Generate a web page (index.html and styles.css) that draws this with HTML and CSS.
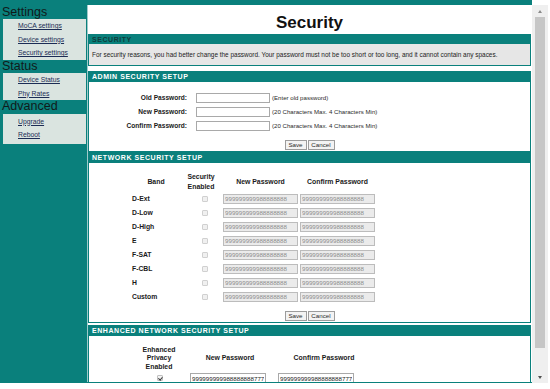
FILE: index.html
```html
<!DOCTYPE html>
<html>
<head>
<meta charset="utf-8">
<title>Security</title>
<link rel="stylesheet" href="styles.css">
</head>
<body>
<div class="screen">
  <div class="frame">
    <nav class="sidebar">
      <div class="nav-title">Settings</div>
      <ul class="nav-box">
        <li><a href="#">MoCA settings</a></li>
        <li><a href="#">Device settings</a></li>
        <li><a href="#">Security settings</a></li>
      </ul>
      <div class="nav-title">Status</div>
      <ul class="nav-box">
        <li><a href="#">Device Status</a></li>
        <li><a href="#">Phy Rates</a></li>
      </ul>
      <div class="nav-title">Advanced</div>
      <ul class="nav-box nav-box-last">
        <li><a href="#">Upgrade</a></li>
        <li><a href="#">Reboot</a></li>
      </ul>
    </nav>
    <main class="content">
      <h1 class="title">Security</h1>

      <section class="panel panel-first">
        <div class="panel-head head-dark">SECURITY</div>
        <div class="panel-note">For security reasons, you had better change the password. Your password must not be too short or too long, and it cannot contain any spaces.</div>
      </section>

      <section class="panel panel-admin">
        <div class="panel-head">ADMIN SECURITY SETUP</div>
        <div class="panel-body admin-body">
          <div class="form-grid">
            <label class="form-label">Old Password:</label>
            <input class="text-input" type="password">
            <span class="hint">(Enter old password)</span>
            <label class="form-label">New Password:</label>
            <input class="text-input" type="password">
            <span class="hint">(20 Characters Max. 4 Characters Min)</span>
            <label class="form-label">Confirm Password:</label>
            <input class="text-input" type="password">
            <span class="hint">(20 Characters Max. 4 Characters Min)</span>
          </div>
          <div class="button-row">
            <button class="btn btn-save" type="button">Save</button>
            <button class="btn btn-cancel" type="button">Cancel</button>
          </div>
        </div>
      </section>

      <section class="panel panel-network">
        <div class="panel-head">NETWORK SECURITY SETUP</div>
        <div class="panel-body network-body">
          <div class="net-grid">
            <div class="th">Band</div>
            <div class="th">Security<br>Enabled</div>
            <div class="th">New Password</div>
            <div class="th">Confirm Password</div>

            <div class="band">D-Ext</div><div class="cb-cell"><input class="check" type="checkbox" disabled></div><input class="text-input net-input" type="text" value="999999999988888888" disabled><input class="text-input net-input" type="text" value="999999999988888888" disabled>
            <div class="band">D-Low</div><div class="cb-cell"><input class="check" type="checkbox" disabled></div><input class="text-input net-input" type="text" value="999999999988888888" disabled><input class="text-input net-input" type="text" value="999999999988888888" disabled>
            <div class="band">D-High</div><div class="cb-cell"><input class="check" type="checkbox" disabled></div><input class="text-input net-input" type="text" value="999999999988888888" disabled><input class="text-input net-input" type="text" value="999999999988888888" disabled>
            <div class="band">E</div><div class="cb-cell"><input class="check" type="checkbox" disabled></div><input class="text-input net-input" type="text" value="999999999988888888" disabled><input class="text-input net-input" type="text" value="999999999988888888" disabled>
            <div class="band">F-SAT</div><div class="cb-cell"><input class="check" type="checkbox" disabled></div><input class="text-input net-input" type="text" value="999999999988888888" disabled><input class="text-input net-input" type="text" value="999999999988888888" disabled>
            <div class="band">F-CBL</div><div class="cb-cell"><input class="check" type="checkbox" disabled></div><input class="text-input net-input" type="text" value="999999999988888888" disabled><input class="text-input net-input" type="text" value="999999999988888888" disabled>
            <div class="band">H</div><div class="cb-cell"><input class="check" type="checkbox" disabled></div><input class="text-input net-input" type="text" value="999999999988888888" disabled><input class="text-input net-input" type="text" value="999999999988888888" disabled>
            <div class="band">Custom</div><div class="cb-cell"><input class="check" type="checkbox" disabled></div><input class="text-input net-input" type="text" value="999999999988888888" disabled><input class="text-input net-input" type="text" value="999999999988888888" disabled>
          </div>
          <div class="button-row">
            <button class="btn btn-save" type="button">Save</button>
            <button class="btn btn-cancel" type="button">Cancel</button>
          </div>
        </div>
      </section>

      <section class="panel panel-enhanced">
        <div class="panel-head">ENHANCED NETWORK SECURITY SETUP</div>
        <div class="panel-body enhanced-body">
          <div class="enh-grid">
            <div class="th enh-th">Enhanced<br>Privacy<br>Enabled</div>
            <div class="th enh-th">New Password</div>
            <div class="th enh-th">Confirm Password</div>
            <div class="cb-cell enh-cb"><input class="check" type="checkbox" checked></div>
            <input class="text-input enh-input enh-new" type="text" value="999999999988888888777">
            <input class="text-input enh-input enh-confirm" type="text" value="999999999988888888777">
          </div>
        </div>
      </section>
    </main>
  </div>
  <div class="scrollbar">
    <div class="sb-arrow"><span class="arrow-up"></span></div>
    <div class="sb-thumb"></div>
    <div class="sb-space"></div>
    <div class="sb-arrow"><span class="arrow-down"></span></div>
  </div>
</div>
</body>
</html>
```

FILE: styles.css
```css
* {
  box-sizing: border-box;
  margin: 0;
  padding: 0;
}

body {
  margin: 0;
  background: #ffffff;
  font-family: "Liberation Sans", Arial, sans-serif;
  color: #1e1e1e;
}

.screen {
  width: 550px;
  height: 389px;
  display: flex;
  align-items: flex-start;
  overflow: hidden;
  background: #ffffff;
}

.frame {
  width: 532px;
  height: 383px;
  flex: none;
  background: #0a807c;
  display: flex;
}

/* ---------- sidebar ---------- */
.sidebar {
  width: 87px;
  flex: none;
  padding-top: 5.5px;
}

.nav-title {
  height: 13.5px;
  line-height: 13.5px;
  font-size: 12.5px;
  padding-left: 2px;
  color: #101a1a;
}

.nav-box {
  list-style: none;
  background: #dae4e0;
  margin: 0 1px 0 3px;
  padding-left: 15px;
}

.nav-box-last {
  padding-top: 1px;
  padding-bottom: 2px;
}

.nav-box li {
  height: 13.5px;
  line-height: 13.5px;
  font-size: 6.8px;
}

.nav-box a {
  color: #1c2c55;
  text-decoration: underline;
}

/* ---------- content ---------- */
.content {
  flex: 1;
  margin-top: 5px;
  height: 377px;
  background: #ffffff;
  border-left: 1px solid #9fcaca;
  padding-right: 1px;
  overflow: hidden;
}

.title {
  margin-top: 8px;
  height: 20px;
  line-height: 20px;
  font-size: 17px;
  font-weight: bold;
  text-align: center;
  color: #111111;
}

.panel {
  border: 1px solid #0a807c;
}

.panel-first { margin-top: 1px; }
.panel-admin { margin-top: 5px; }
.panel-network { margin-top: 0; }
.panel-enhanced { margin-top: 2px; }

.panel-head {
  height: 10px;
  line-height: 10px;
  background: #0a807c;
  color: #ffffff;
  font-size: 7px;
  font-weight: bold;
  letter-spacing: 0.55px;
  padding-left: 3px;
}

.panel-first .panel-head {
  height: 9px;
  line-height: 9px;
}

.head-dark {
  color: #0f3c3b;
}

.panel-note {
  background: #e6e6e6;
  height: 21px;
  line-height: 21px;
  font-size: 6.45px;
  padding-left: 3px;
  color: #222222;
  white-space: nowrap;
}

.panel-body {
  background: #ffffff;
}

.admin-body {
  padding-top: 8.5px;
  padding-bottom: 1px;
}

.form-grid {
  display: grid;
  grid-template-columns: 107px 76px auto;
  grid-auto-rows: 14px;
  align-items: center;
}

.form-label {
  text-align: right;
  padding-right: 9px;
  font-size: 6.6px;
  font-weight: bold;
  color: #1a1a1a;
}

.text-input {
  height: 10px;
  border: 1px solid #a9a9a9;
  background: #ffffff;
  font-family: "Liberation Sans", Arial, sans-serif;
  font-size: 6.2px;
  padding: 0 1px;
  color: #222;
  outline: none;
}

.form-grid .text-input {
  width: 74px;
}

.hint {
  font-size: 6.1px;
  color: #2a2a2a;
  white-space: nowrap;
}

.button-row {
  display: flex;
  justify-content: center;
  gap: 1px;
  margin-top: 7.5px;
}

.btn {
  height: 10px;
  font-family: "Liberation Sans", Arial, sans-serif;
  font-size: 6.2px;
  line-height: 8px;
  color: #2a2a2a;
  background: #f3f3f3;
  border: 1px solid #9c9c9c;
  padding: 0;
}

.btn-save { width: 22px; }
.btn-cancel { width: 27px; }

/* ---------- network table ---------- */
.network-body {
  padding-top: 8.5px;
  padding-bottom: 1px;
}

.net-grid {
  display: grid;
  grid-template-columns: 48px 42px 77px 77px;
  grid-template-rows: 20px;
  grid-auto-rows: 14px;
  align-items: center;
  margin-left: 43px;
}

.th {
  font-size: 6.9px;
  font-weight: bold;
  line-height: 10px;
  text-align: center;
  color: #1a1a1a;
}

.band {
  font-size: 6.8px;
  font-weight: bold;
  color: #1a1a1a;
}

.cb-cell {
  display: flex;
  justify-content: center;
  padding-left: 7px;
}

.check {
  appearance: none;
  -webkit-appearance: none;
  width: 6px;
  height: 6px;
  border: 1px solid #d0d0d0;
  background: #f0f0f0;
  border-radius: 1px;
  position: relative;
  margin: 0;
}

.check:checked {
  border-color: #c0c0c0;
  background: #f4f4f4;
}

.check:checked::after {
  content: "";
  position: absolute;
  left: 1.2px;
  top: 0px;
  width: 1.5px;
  height: 2.8px;
  border: solid #3a3a3a;
  border-width: 0 1px 1px 0;
  transform: rotate(40deg);
}

.net-input {
  width: 75px;
  margin-left: 1px;
  background: #ebebeb;
  border-color: #bcbcbc;
  color: #8c8c8c;
}

/* ---------- enhanced ---------- */
.enhanced-body {
  padding-top: 9.5px;
}

.enh-grid {
  display: grid;
  grid-template-columns: 58px 84px 104px;
  grid-template-rows: 25.5px 12px;
  align-items: center;
  margin-left: 41px;
}

.enh-th {
  line-height: 8.5px;
}

.enh-cb {
  padding-left: 2px;
  align-self: end;
  padding-bottom: 2px;
}

.enh-input {
  width: 76px;
  align-self: end;
  color: #1a1a1a;
}

.enh-new { margin-left: 2px; }
.enh-confirm { margin-left: 6px; }

/* ---------- scrollbar ---------- */
.scrollbar {
  width: 16px;
  height: 378px;
  margin-top: 5px;
  flex: none;
  background: #efefef;
  display: flex;
  flex-direction: column;
  align-items: center;
}

.sb-arrow {
  height: 12px;
  width: 16px;
  display: flex;
  align-items: center;
  justify-content: center;
}

.arrow-up {
  width: 0;
  height: 0;
  border-left: 2.5px solid transparent;
  border-right: 2.5px solid transparent;
  border-bottom: 3px solid #8a8a8a;
}

.arrow-down {
  width: 0;
  height: 0;
  border-left: 2.5px solid transparent;
  border-right: 2.5px solid transparent;
  border-top: 3px solid #505050;
}

.sb-thumb {
  width: 10px;
  height: 331px;
  background: #c6c6c6;
}

.sb-space {
  flex: 1;
}
```
